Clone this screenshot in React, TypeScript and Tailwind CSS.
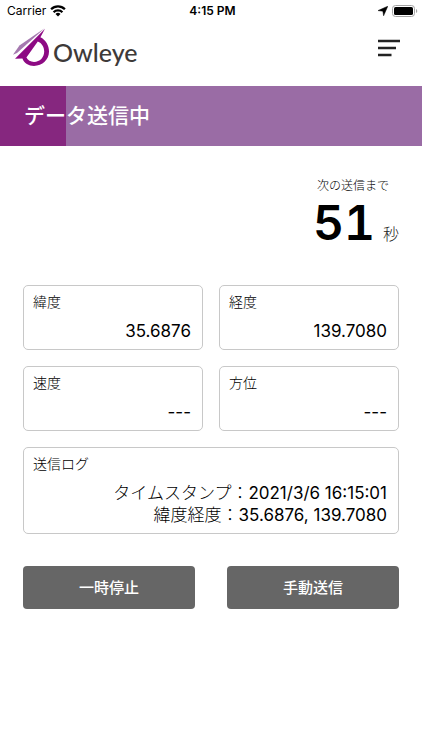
import React, { useState } from 'react';

const INTERVAL = 60;

const StatusBar: React.FC = () => (
  <div className="grid grid-cols-3 items-center h-[22px] pl-[7px] pr-1 text-xs leading-[22px]">
    <div className="flex items-center gap-1">
      <span>Carrier</span>
      <svg viewBox="0 0 16 12" className="w-4 h-3" aria-hidden="true">
        <path d="M8 11.6 5.5 9a3.5 3.5 0 0 1 5 0Z" fill="#000" />
        <path d="M3.6 7.2a6.2 6.2 0 0 1 8.8 0" fill="none" stroke="#000" strokeWidth="2.3" />
        <path d="M1.1 4.3a9.8 9.8 0 0 1 13.8 0" fill="none" stroke="#000" strokeWidth="2.3" />
      </svg>
    </div>
    <span className="text-center font-semibold">4:15 PM</span>
    <div className="flex items-center justify-end gap-1">
      <svg viewBox="0 0 10 10" className="w-[10px] h-[10px]" aria-hidden="true">
        <path d="M9.8.2 5.6 9.8 4.9 5.2 0 4.6Z" fill="#000" stroke="#000" strokeWidth="0.5" />
      </svg>
      <svg viewBox="0 0 26 12" className="w-[26px] h-3" aria-hidden="true">
        <rect x="0.5" y="0.5" width="22" height="11" rx="3" fill="none" stroke="#a3a3a3" />
        <rect x="2" y="2" width="19" height="8" rx="1.6" fill="#000" />
        <path d="M24 4v4a2.2 2.2 0 0 0 0-4Z" fill="#a3a3a3" />
      </svg>
    </div>
  </div>
);

const Logo: React.FC = () => (
  <a href="#" className="flex items-center gap-[2px]">
    <svg viewBox="0 0 38 40" className="w-[38px] h-10" aria-hidden="true">
      <path d="M31.6.2 6.4 17.4 0 26.8 4 25Z" fill="#a579af" />
      <path
        fillRule="evenodd"
        d="M32 .8 2 30.8 9.4 30.6C11.2 35.4 15.6 38 21 38 29.4 38 36 31.6 36 23.6 36 17.4 32.6 11.6 27.4 9.2ZM24.8 13.4C28.8 15 31.2 18.8 31.2 23.6 31.2 29.4 27 34 21 34 17.4 34 14.8 32.4 13.4 29.6Z"
        fill="#8d0a83"
      />
    </svg>
    <span className="pt-2 font-['Lato','Liberation_Sans',sans-serif] text-[25px] leading-10 font-medium text-[#3e3a39]">
      Owleye
    </span>
  </a>
);

const Header: React.FC = () => (
  <header className="flex items-start justify-between h-16 pl-[13px] pr-[22px] pt-[2px]">
    <Logo />
    <button type="button" aria-label="メニュー" className="mt-[15px]">
      <svg viewBox="0 0 22 18" className="w-[22px] h-[18px]" aria-hidden="true">
        <path d="M0 2h22M0 9h18M0 16h13.5" stroke="#222" strokeWidth="2.6" />
      </svg>
    </button>
  </header>
);

interface CardProps {
  label: string;
  children: React.ReactNode;
}

const Card: React.FC<CardProps> = ({ label, children }) => (
  <section className="rounded-[5px] border border-[#c8c8c8] px-[9px] pt-[5px] pb-[7px]">
    <h2 className="text-sm leading-[22px] font-light">{label}</h2>
    <div className="mt-[7px] pr-[2px] text-right text-[17px] leading-[22px]">{children}</div>
  </section>
);

const App: React.FC = () => {
  const [remaining] = useState(51);
  const progress = ((INTERVAL - remaining) / INTERVAL) * 100;

  return (
    <div className="min-h-screen bg-white text-black font-['Inter','Noto_Sans_CJK_JP',sans-serif]">
      <StatusBar />
      <Header />

      <div className="relative bg-[#9a6ca5]">
        <div className="absolute inset-y-0 left-0 bg-[#86277f]" style={{ width: `${progress + 0.6}%` }} />
        <h1 className="relative pl-6 text-[21px] leading-[60px] font-medium text-white">データ送信中</h1>
      </div>

      <main className="px-[23px]">
        <div className="flex flex-col items-end pt-[30px]">
          <p className="pr-[10px] text-xs leading-5 font-light">次の送信まで</p>
          <p className="flex items-baseline gap-2">
            <span className="text-5xl leading-[54px] font-semibold tabular-nums">{remaining}</span>
            <span className="text-base font-light text-[#222]">秒</span>
          </p>
        </div>

        <div className="grid grid-cols-2 gap-4 mt-[35px]">
          <Card label="緯度">35.6876</Card>
          <Card label="経度">139.7080</Card>
          <Card label="速度">---</Card>
          <Card label="方位">---</Card>
          <div className="col-span-2">
            <Card label="送信ログ">
              <p>
                <span className="font-light">タイムスタンプ：</span>2021/3/6 16:15:01
              </p>
              <p>
                <span className="font-light">緯度経度：</span>35.6876, 139.7080
              </p>
            </Card>
          </div>
        </div>

        <div className="grid grid-cols-2 gap-8 mt-8">
          <button type="button" className="rounded bg-[#666] pt-px text-[15px] leading-[42px] font-medium text-white">
            一時停止
          </button>
          <button type="button" className="rounded bg-[#666] pt-px text-[15px] leading-[42px] font-medium text-white">
            手動送信
          </button>
        </div>
      </main>
    </div>
  );
};

export default App;
